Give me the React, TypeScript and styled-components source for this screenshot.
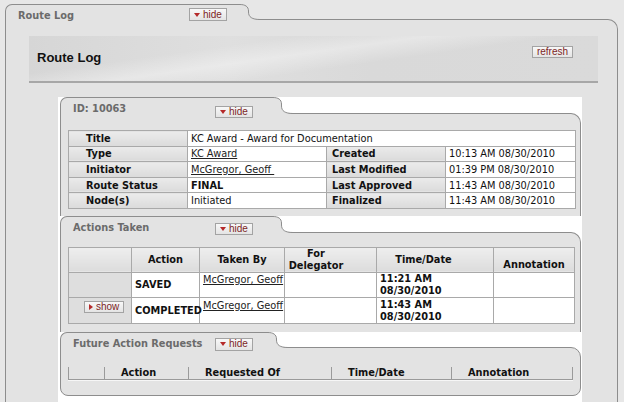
import React from "react";
import styled, { createGlobalStyle } from "styled-components";

const PANEL = "#e3e3e3";
const LINE = "#8d8d8d";
const CELL_LINE = "#a9a9a9";

const Global = createGlobalStyle`
  html, body { margin: 0; padding: 0; }
  body {
    width: 624px; height: 402px; overflow: hidden;
    background: #e7e7e7;
    font-family: "DejaVu Sans", Verdana, sans-serif;
    font-size: 9.8px; color: #111;
  }
`;

const Page = styled.div`
  box-sizing: border-box;
  height: 402px;
  padding: 4px 6px 0 5px;
  display: flex;
  flex-direction: column;
`;

const Panel = styled.section<{ $grow?: boolean }>`
  display: flex;
  flex-direction: column;
  ${(p) => (p.$grow ? "flex: 1;" : "")}
`;

const PanelHeader = styled.div<{ $h: number }>`
  display: flex;
  align-items: stretch;
  height: ${(p) => p.$h + 1}px;
  margin-bottom: -1px;
  position: relative;
  z-index: 1;
`;

const Tab = styled.div<{ $w: number; $pt: number }>`
  width: ${(p) => p.$w}px;
  flex-shrink: 0;
  box-sizing: border-box;
  background: ${PANEL};
  border-top: 1px solid ${LINE};
  border-left: 1px solid ${LINE};
  border-top-left-radius: 7px;
  display: flex;
  align-items: flex-start;
  padding: ${(p) => p.$pt}px 0 0 12px;
`;

const TabTitle = styled.div<{ $w: number }>`
  width: ${(p) => p.$w}px;
  flex-shrink: 0;
  font-weight: bold;
  color: #6b6b6b;
  line-height: 12px;
  white-space: nowrap;
`;

const EdgeSvg = styled.svg`
  display: block;
  flex-shrink: 0;
`;

const SmallButton = styled.button<{ $mt?: number; $h?: number }>`
  display: inline-flex;
  align-items: center;
  gap: 3px;
  box-sizing: border-box;
  height: ${(p) => p.$h ?? 13}px;
  margin: ${(p) => p.$mt ?? 0}px 0 0 0;
  padding: 0 4px;
  border: 1px solid #a3a3a3;
  background: linear-gradient(#f8f8f8, #e4e4e4);
  color: #7d1f1f;
  font-family: "Liberation Sans", Arial, sans-serif;
  font-size: 10px;
  line-height: 10px;
  cursor: pointer;
`;

const DownArrow = styled.span`
  width: 0; height: 0;
  border-left: 3px solid transparent;
  border-right: 3px solid transparent;
  border-top: 4px solid #b52a2a;
`;

const RightArrow = styled.span`
  width: 0; height: 0;
  border-top: 3px solid transparent;
  border-bottom: 3px solid transparent;
  border-left: 4px solid #b52a2a;
`;

const Body = styled.div<{ $pad: string; $closed?: boolean; $grow?: boolean }>`
  background: ${PANEL};
  border: 1px solid ${LINE};
  border-bottom: ${(p) => (p.$closed ? `1px solid ${LINE}` : "none")};
  border-top-right-radius: 10px;
  ${(p) => (p.$closed ? "border-bottom-left-radius: 8px; border-bottom-right-radius: 8px;" : "")}
  padding: ${(p) => p.$pad};
  ${(p) => (p.$grow ? "flex: 1;" : "")}
`;

const HeaderBand = styled.div`
  box-sizing: border-box;
  height: 47px;
  border-bottom: 2px solid #a7a7a7;
  background:
    linear-gradient(172deg, rgba(255,255,255,0) 30%, rgba(255,255,255,0.35) 45%, rgba(255,255,255,0) 60%),
    linear-gradient(90deg, #d6d6d6, #dfdfdf 35%, #d9d9d9 60%, #dadada);
  display: flex;
  justify-content: space-between;
  align-items: center;
  padding: 0 25px 0 8px;
`;

const BandTitle = styled.h2`
  margin: 0 0 2px 0;
  font-family: "Liberation Sans", Arial, sans-serif;
  font-size: 13px;
  font-weight: bold;
  color: #111;
`;

const RefreshSlot = styled.div`
  align-self: flex-start;
  padding-top: 10px;
`;

const WhiteArea = styled.div`
  margin: 14px 16px 0 29px;
  background: #fff;
  padding: 0 1px 6px 2px;
`;

/* ID table */
const InfoTable = styled.table`
  width: 507px;
  border-collapse: collapse;
  table-layout: fixed;
  background: #fff;
`;

const InfoRow = styled.tr`
  height: 15.6px;
`;

const LabelCell = styled.th<{ $pad: number }>`
  background: linear-gradient(#ebebeb, #dbdbdb);
  border: 1px solid ${CELL_LINE};
  text-align: left;
  font-weight: bold;
  padding: 0 0 0 ${(p) => p.$pad}px;
  line-height: 13px;
  white-space: nowrap;
`;

const ValueCell = styled.td<{ $bold?: boolean }>`
  border: 1px solid ${CELL_LINE};
  padding: 0 0 0 3px;
  line-height: 13px;
  white-space: nowrap;
  font-weight: ${(p) => (p.$bold ? "bold" : "normal")};
`;

const Link = styled.a`
  color: #222;
  text-decoration: underline;
  white-space: pre;
`;

/* Actions table */
const ActionsTable = styled.table`
  width: 506px;
  border-collapse: collapse;
  table-layout: fixed;
  background: #fff;
`;

const ActionsRow = styled.tr<{ $h: number }>`
  height: ${(p) => p.$h}px;
`;

const HeadCell = styled.th<{ $pad?: string; $valign?: string }>`
  background: linear-gradient(#eeeeee, #dcdcdc);
  border: 1px solid ${CELL_LINE};
  font-weight: bold;
  text-align: center;
  line-height: 12px;
  padding: ${(p) => p.$pad ?? "0"};
  vertical-align: ${(p) => p.$valign ?? "middle"};
`;

const RowCell = styled.td<{ $grey?: boolean; $valign?: string; $bold?: boolean; $pad?: string }>`
  border: 1px solid ${CELL_LINE};
  background: ${(p) => (p.$grey ? "#dedede" : "#fff")};
  line-height: 12px;
  padding: ${(p) => p.$pad ?? "1px 0 0 3px"};
  vertical-align: ${(p) => p.$valign ?? "top"};
  font-weight: ${(p) => (p.$bold ? "bold" : "normal")};
  white-space: nowrap;
`;

/* Future table */
const FutureTable = styled.table`
  width: 505px;
  border-collapse: separate;
  border-spacing: 0;
  table-layout: fixed;
  border-bottom: 1px solid #9a9a9a;
  box-shadow: 0 1px 0 #f6f6f6;
`;

const FutureHead = styled.th<{ $last?: boolean }>`
  border-left: 1px solid #9a9a9a;
  ${(p) => (p.$last ? "border-right: 1px solid #9a9a9a;" : "")}
  text-align: left;
  font-weight: bold;
  padding: 0 0 0 16px;
  height: 12px;
  line-height: 12px;
  white-space: nowrap;
`;

const TabEdge: React.FC<{ h: number }> = ({ h }) => {
  const curve = `M0 0.5 C5 0.5 8.5 2.5 8.5 7 L8.5 ${h - 7} C8.5 ${h - 2} 12 ${h + 0.5} 20 ${h + 0.5}`;
  return (
    <EdgeSvg width={20} height={h + 1} viewBox={`0 0 20 ${h + 1}`}>
      <path d={`${curve} L20 ${h + 1} L0 ${h + 1} Z`} fill={PANEL} />
      <path d={curve} fill="none" stroke={LINE} strokeWidth={1} />
    </EdgeSvg>
  );
};

const HideButton: React.FC<{ mt?: number; h?: number }> = ({ mt, h }) => (
  <SmallButton $mt={mt} $h={h}>
    <DownArrow />
    hide
  </SmallButton>
);

const TabBar: React.FC<{ title: string; w: number; titleW: number; h: number; pt: number; btnMt: number; btnH?: number }> = ({
  title, w, titleW, h, pt, btnMt, btnH,
}) => (
  <PanelHeader $h={h}>
    <Tab $w={w} $pt={pt}>
      <TabTitle $w={titleW}>{title}</TabTitle>
      <HideButton mt={btnMt} h={btnH} />
    </Tab>
    <TabEdge h={h} />
  </PanelHeader>
);

export default function App() {
  return (
    <>
      <Global />
      <Page>
        <Panel $grow>
          <TabBar title="Route Log" w={235} titleW={171} h={15} pt={5} btnMt={-2} />
          <Body $pad="16px 19px 0 23px" $grow>
            <HeaderBand>
              <BandTitle>Route Log</BandTitle>
              <RefreshSlot>
                <SmallButton $h={12}>refresh</SmallButton>
              </RefreshSlot>
            </HeaderBand>

            <WhiteArea>
              <Panel>
                <TabBar title="ID: 10063" w={213} titleW={142} h={16} pt={5} btnMt={3} btnH={12} />
                <Body $pad="16px 4px 7px 7px">
                  <InfoTable>
                    <colgroup>
                      <col style={{ width: 119 }} />
                      <col style={{ width: 139 }} />
                      <col style={{ width: 119 }} />
                      <col style={{ width: 130 }} />
                    </colgroup>
                    <tbody>
                      <InfoRow>
                        <LabelCell $pad={17}>Title</LabelCell>
                        <ValueCell colSpan={3}>KC Award - Award for Documentation</ValueCell>
                      </InfoRow>
                      <InfoRow>
                        <LabelCell $pad={17}>Type</LabelCell>
                        <ValueCell><Link>KC Award</Link></ValueCell>
                        <LabelCell $pad={5}>Created</LabelCell>
                        <ValueCell>10:13 AM 08/30/2010</ValueCell>
                      </InfoRow>
                      <InfoRow>
                        <LabelCell $pad={17}>Initiator</LabelCell>
                        <ValueCell><Link>McGregor, Geoff </Link></ValueCell>
                        <LabelCell $pad={5}>Last Modified</LabelCell>
                        <ValueCell>01:39 PM 08/30/2010</ValueCell>
                      </InfoRow>
                      <InfoRow>
                        <LabelCell $pad={17}>Route Status</LabelCell>
                        <ValueCell $bold>FINAL</ValueCell>
                        <LabelCell $pad={5}>Last Approved</LabelCell>
                        <ValueCell>11:43 AM 08/30/2010</ValueCell>
                      </InfoRow>
                      <InfoRow>
                        <LabelCell $pad={17}>Node(s)</LabelCell>
                        <ValueCell>Initiated</ValueCell>
                        <LabelCell $pad={5}>Finalized</LabelCell>
                        <ValueCell>11:43 AM 08/30/2010</ValueCell>
                      </InfoRow>
                    </tbody>
                  </InfoTable>
                </Body>
              </Panel>

              <Panel>
                <TabBar title="Actions Taken" w={213} titleW={142} h={16} pt={5} btnMt={1} btnH={12} />
                <Body $pad="14px 4px 8px 7px">
                  <ActionsTable>
                    <colgroup>
                      <col style={{ width: 63 }} />
                      <col style={{ width: 68 }} />
                      <col style={{ width: 85 }} />
                      <col style={{ width: 92 }} />
                      <col style={{ width: 117 }} />
                      <col style={{ width: 81 }} />
                    </colgroup>
                    <thead>
                      <ActionsRow $h={24}>
                        <HeadCell />
                        <HeadCell>Action</HeadCell>
                        <HeadCell>Taken By</HeadCell>
                        <HeadCell $pad="0 30px 0 1px">For<br />Delegator</HeadCell>
                        <HeadCell $pad="0 23px 0 0">Time/Date</HeadCell>
                        <HeadCell $valign="bottom" $pad="0 0 1px 0">Annotation</HeadCell>
                      </ActionsRow>
                    </thead>
                    <tbody>
                      <ActionsRow $h={24}>
                        <RowCell $grey />
                        <RowCell $bold $valign="middle">SAVED</RowCell>
                        <RowCell><Link>McGregor, Geoff</Link></RowCell>
                        <RowCell />
                        <RowCell $bold $pad="0 0 0 3px">11:21 AM<br />08/30/2010</RowCell>
                        <RowCell />
                      </ActionsRow>
                      <ActionsRow $h={25}>
                        <RowCell $grey $pad="3px 0 0 15px">
                          <SmallButton $h={12}>
                            <RightArrow />
                            show
                          </SmallButton>
                        </RowCell>
                        <RowCell $bold $valign="middle">COMPLETED</RowCell>
                        <RowCell $pad="2px 0 0 3px"><Link>McGregor, Geoff</Link></RowCell>
                        <RowCell />
                        <RowCell $bold $pad="1px 0 0 3px">11:43 AM<br />08/30/2010</RowCell>
                        <RowCell />
                      </ActionsRow>
                    </tbody>
                  </ActionsTable>
                </Body>
              </Panel>

              <Panel>
                <TabBar title="Future Action Requests" w={208} titleW={142} h={15} pt={5} btnMt={0} btnH={13} />
                <Body $pad="19px 6px 15px 7px" $closed>
                  <FutureTable>
                    <colgroup>
                      <col style={{ width: 36 }} />
                      <col style={{ width: 84 }} />
                      <col style={{ width: 143 }} />
                      <col style={{ width: 120 }} />
                      <col style={{ width: 122 }} />
                    </colgroup>
                    <thead>
                      <tr>
                        <FutureHead />
                        <FutureHead>Action</FutureHead>
                        <FutureHead>Requested Of</FutureHead>
                        <FutureHead>Time/Date</FutureHead>
                        <FutureHead $last>Annotation</FutureHead>
                      </tr>
                    </thead>
                  </FutureTable>
                </Body>
              </Panel>
            </WhiteArea>
          </Body>
        </Panel>
      </Page>
    </>
  );
}
